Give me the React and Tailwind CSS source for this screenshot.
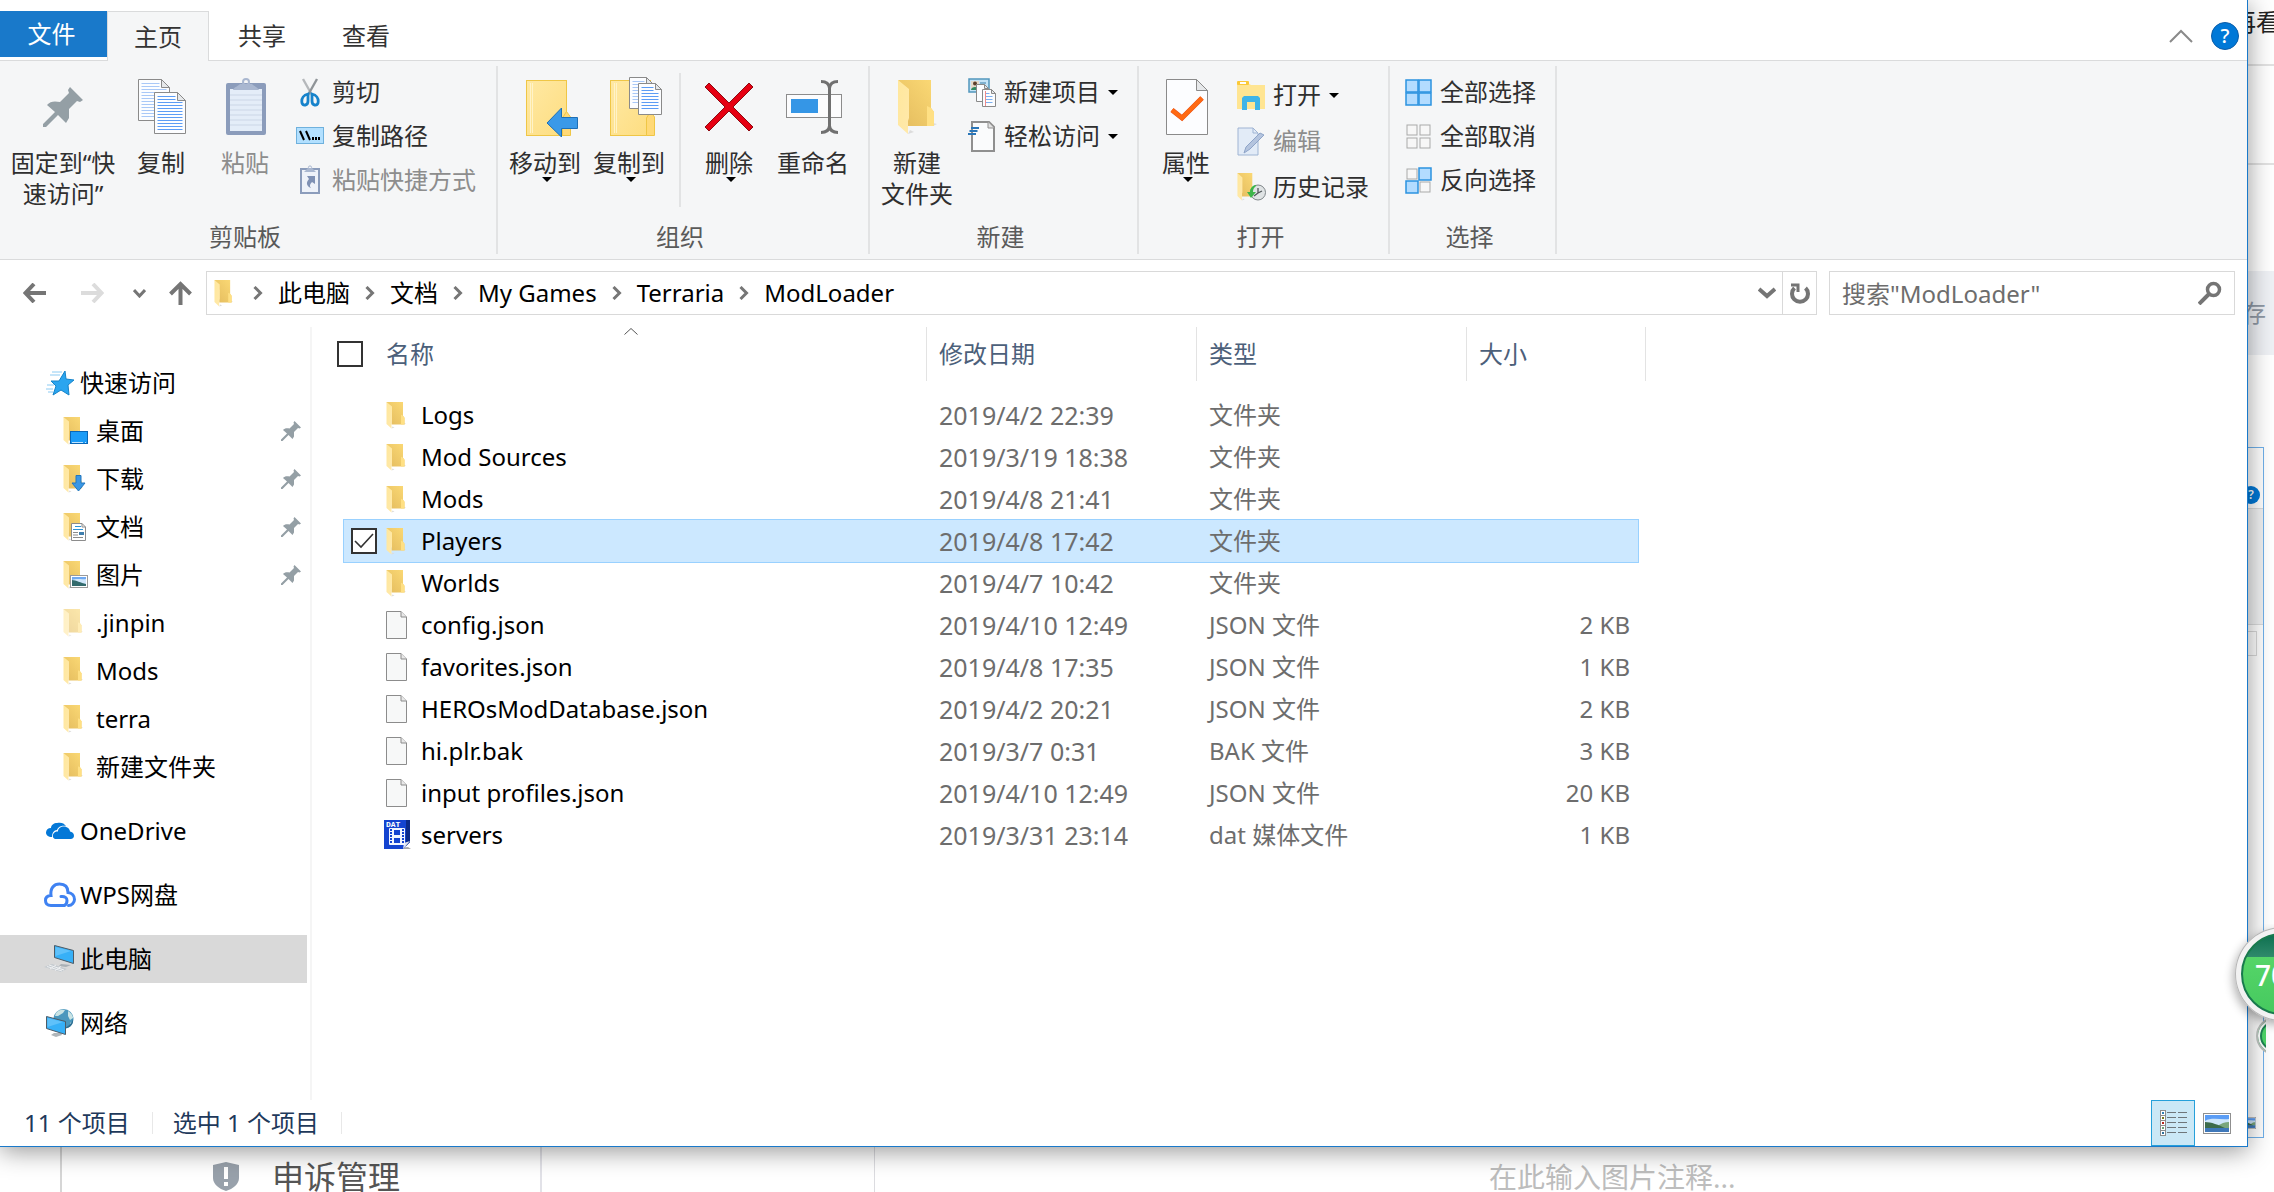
import React from "react";

const FONT = "font-['Noto_Sans','Noto_Sans_CJK_SC',sans-serif]";

/* ---------- icons ---------- */

function Page({ x = 0, y = 0, w, h, fold = 8, lines = 0, stroke = "#8a8a8a", ink = "#5b9cf5", gap = 3 }) {
  return (
    <g>
      <path
        d={`M${x} ${y}H${x + w - fold}L${x + w} ${y + fold}V${y + h}H${x}Z`}
        fill="#fcfdff"
        stroke={stroke}
      />
      <path
        d={`M${x + w - fold} ${y}V${y + fold}H${x + w}Z`}
        fill="#e6e8ea"
        stroke={stroke}
      />
      {Array.from({ length: lines }, (_, i) => (
        <path
          key={i}
          d={`M${x + 3} ${y + 4 + i * gap}H${4 + i * gap <= fold + 1 ? x + w - fold - 2 : x + w - 3}`}
          stroke={ink}
        />
      ))}
    </g>
  );
}

function Folder({ w = 20, h = 27, faded = false }) {
  return (
    <svg width={w} height={h} viewBox="0 0 40 55" preserveAspectRatio="none" opacity={faded ? 0.6 : 1} aria-hidden="true">
      <defs>
        <linearGradient id="folderBack" x1="0" y1="1" x2="1" y2="0">
          <stop offset="0.2" stopColor="#e8c162" />
          <stop offset="1" stopColor="#fbd975" />
        </linearGradient>
        <linearGradient id="folderFront" x1="0" y1="0" x2="1" y2="1">
          <stop offset="0" stopColor="#ffe79c" />
          <stop offset="1" stopColor="#ffe9ab" />
        </linearGradient>
      </defs>
      <path d="M11 54L17 52L13 50ZM36 46L40 44L36 43Z" fill="#dcdcdc" />
      <path d="M1 0H34V28L37 32V46H11V20Z" fill="url(#folderBack)" />
      <path d="M30 26L34 28L37 32V46H30Z" fill="#ffe084" />
      <path d="M1 0L12 9V38L11 41V54L1 45Z" fill="url(#folderFront)" />
    </svg>
  );
}

function PinIcon({ size = 40 }) {
  return (
    <svg width={size} height={size} viewBox="0 0 40 40" fill="#949fa5" aria-hidden="true">
      <path d="M27 0L40 13L37 15L34 14L26 22V31L23 36L15 28L3 40H0V37L12 25L4 18C7 14 12 14 17 15L26 6L25 3Z" />
    </svg>
  );
}

function CopyIcon() {
  return (
    <svg width="48" height="57" viewBox="0 0 48 57" className="ml-0.5" aria-hidden="true">
      <Page x={0.5} y={0.5} w={31} h={41} lines={12} ink="#a9c8f7" />
      <Page x={16.5} y={13.5} w={31} h={41} lines={12} />
    </svg>
  );
}

function PasteIcon() {
  return (
    <svg width="40" height="58" viewBox="0 0 40 58" className="ml-0.5" aria-hidden="true">
      <rect x="0" y="5" width="40" height="52" rx="2" fill="#8b9cbb" />
      <path d="M4 11H36V53H4Z" fill="#e4edf8" />
      <path d="M4 17H36M4 22H36M4 27H36M4 32H36M4 37H36M4 42H36M4 47H36" stroke="#cbd6e6" />
      <path d="M7 12C8 9 11 9 14 6H26C29 9 32 9 33 12Z" fill="#a9b7d0" />
      <circle cx="20" cy="4" r="3" fill="none" stroke="#a9b7d0" strokeWidth="2" />
    </svg>
  );
}

function CutIcon() {
  return (
    <svg width="20" height="29" viewBox="0 0 20 29" fill="none" aria-hidden="true">
      <path d="M3 1L12 17" stroke="#b5b8bb" strokeWidth="2.4" />
      <path d="M17 1L8 17" stroke="#8f9498" strokeWidth="2.4" />
      <path d="M8 16C4 17 1 20 2 25C3 28 8 28 8 23ZM12 16C16 17 19 20 18 25C17 28 12 28 12 23Z" stroke="#1783cb" strokeWidth="2.8" />
    </svg>
  );
}

function PathIcon() {
  return (
    <svg width="28" height="18" viewBox="0 0 28 18" aria-hidden="true">
      <rect x="0.5" y="0.5" width="27" height="16" fill="#b2e0ff" stroke="#6fb1dd" />
      <path d="M4 4L8 13M10 4L14 13" stroke="#000" strokeWidth="2" />
      <path d="M16 10H18V13H16ZM19 10H21V13H19ZM22 10H24V13H22Z" fill="#000" />
    </svg>
  );
}

function PasteShortcutIcon() {
  return (
    <svg width="20" height="30" viewBox="0 0 20 30" aria-hidden="true">
      <rect x="1" y="4" width="18" height="24" fill="#eef2f9" stroke="#8b9cbb" strokeWidth="2" />
      <path d="M4 7L8 3H12L16 7Z" fill="#a9b7d0" />
      <circle cx="10" cy="2.5" r="1.6" fill="none" stroke="#a9b7d0" />
      <path d="M7 11H15V19L12 17C10 19 9 21 11 23C6 21 6 17 9 14Z" fill="#7f91b4" />
    </svg>
  );
}

function FolderBase({ children }) {
  return (
    <svg width="54" height="60" viewBox="0 0 54 60" className="ml-4" aria-hidden="true">
      <defs>
        <linearGradient id="flatFolder" x1="0" y1="0" x2="1" y2="1">
          <stop offset="0" stopColor="#ffe9a4" />
          <stop offset="1" stopColor="#fddd80" />
        </linearGradient>
      </defs>
      <rect x="0.5" y="3.5" width="40" height="55" fill="url(#flatFolder)" stroke="#efc646" />
      <path d="M4.5 6V56M6.5 6V56" stroke="#fff3c9" />
      <path d="M36.5 58.5V41L40.5 34.5L44.5 40V58.5Z" fill="#ffd977" stroke="#efc646" />
      {children}
    </svg>
  );
}

function MoveToIcon() {
  return (
    <FolderBase>
      <path d="M21 46L35.5 31V40.5H51.5V51.5H35.5V60Z" fill="#3a99e8" stroke="#1e6fb5" />
    </FolderBase>
  );
}

function CopyToIcon() {
  return (
    <FolderBase>
      <Page x={19.5} y={0.5} w={23} h={31} fold={6} lines={8} ink="#a9c8f7" />
      <Page x={28.5} y={6.5} w={23} h={31} fold={6} lines={8} />
    </FolderBase>
  );
}

function DeleteIcon() {
  return (
    <svg width="50" height="50" viewBox="0 0 50 50" aria-hidden="true">
      <path d="M5 1L25 21L45 1L49 5L29 25L49 45L45 49L25 29L5 49L1 45L21 25L1 5Z" fill="#e60012" stroke="#8e0b12" />
    </svg>
  );
}

function RenameIcon() {
  return (
    <svg width="56" height="54" viewBox="0 0 56 54" fill="none" className="ml-0.5" aria-hidden="true">
      <rect x="0.5" y="14.5" width="55" height="23" fill="#fcfcfd" stroke="#8c8c8c" />
      <rect x="5" y="19" width="27" height="14" fill="#3596e6" />
      <path d="M35 1.5C40 1.5 43 3 43.5 8V46C43 51 40 52.5 35 52.5M52 1.5C47 1.5 44 3 43.5 8M43.5 46C44 51 47 52.5 52 52.5" stroke="#707070" strokeWidth="3" />
    </svg>
  );
}

function NewItemIcon() {
  return (
    <svg width="29" height="29" viewBox="0 0 29 29" aria-hidden="true">
      <rect x="1" y="1" width="20" height="13" fill="#c5e4f7" stroke="#5197bd" strokeWidth="1.5" />
      <rect x="3" y="3" width="8" height="9" fill="#e5d9c8" />
      <circle cx="7" cy="5.5" r="2" fill="#5b3f2c" />
      <path d="M3 12C3 8 11 8 11 12Z" fill="#2f8a62" />
      <path d="M12 5H18" stroke="#3b7fa8" />
      <Page x={8.5} y={6.5} w={12} h={17} fold={4} />
      <Page x={14.5} y={11.5} w={13} h={17} fold={4} lines={4} ink="#7db0f0" />
      <path d="M17.5 13V28" stroke="#f08a8a" />
    </svg>
  );
}

function EasyAccessIcon() {
  return (
    <svg width="28" height="31" viewBox="0 0 28 31" aria-hidden="true">
      <path d="M4 1H21L26 6V30H4Z" fill="#fafbfc" stroke="#8f8f8f" strokeWidth="2" />
      <path d="M20 1V7H26" fill="#e3e3e3" stroke="#8f8f8f" />
      <path d="M3 7H11M1.5 10H9.5M0 13H8" stroke="#2a76b8" strokeWidth="1.8" />
    </svg>
  );
}

function PropertiesIcon() {
  return (
    <svg width="43" height="57" viewBox="0 0 43 57" className="ml-0.5" aria-hidden="true">
      <Page x={0.5} y={0.5} w={41} h={55} fold={11} />
      <path d="M6 31L16 39L36 19" fill="none" stroke="#e8521b" strokeWidth="5" />
      <path d="M6 31L16 39L36 19" fill="none" stroke="#ff6a13" strokeWidth="4" />
    </svg>
  );
}

function OpenIcon() {
  return (
    <svg width="28" height="29" viewBox="0 0 28 29" aria-hidden="true">
      <path d="M0 2H11L14 4H28V28H0Z" fill="#ffe592" />
      <rect x="0" y="0" width="12" height="4" rx="1" fill="#fbc938" />
      <rect x="3" y="1" width="6" height="2" fill="#fff" />
      <path d="M5 29V17L7 15H21L23 17V29H18V21H10V29Z" fill="#3fb4e8" />
    </svg>
  );
}

function EditIcon() {
  return (
    <svg width="28" height="29" viewBox="0 0 28 29" aria-hidden="true">
      <path d="M1 1H16L21 6V28H1Z" fill="#e2ebf7" stroke="#9fb4d3" />
      <path d="M16 1V6H21" fill="none" stroke="#9fb4d3" />
      <path d="M7 26L9 20L23 6L27 8L13 22Z" fill="#b4c4de" stroke="#8ea4c8" />
    </svg>
  );
}

function HistoryIcon() {
  return (
    <div className="relative h-7 w-7">
      <Folder w={18} h={28} />
      <svg className="absolute -right-px bottom-0" width="19" height="17" viewBox="0 0 19 17" aria-hidden="true">
        <circle cx="11" cy="8.5" r="7.5" fill="#dfe3e4" stroke="#7f8689" />
        <path d="M11 4V9L15 7M11 9L7 12" stroke="#51575a" fill="none" strokeWidth="1.3" />
        <path d="M9 2L7 4C6 6 6 7 6 8H9L4 14L0 8H3C3 4 6 1 9 1Z" fill="#3db54a" />
      </svg>
    </div>
  );
}

const SELECT_STYLES = {
  on: { fill: "#b3dcff", stroke: "#2b93e0" },
  off: { fill: "#f7f7f7", stroke: "#a9a9a9" },
};

function SelectIcon({ cells }) {
  const spots = [[1, 1], [14, 1], [1, 14], [14, 14]];
  return (
    <svg width="27" height="27" viewBox="0 0 27 27" aria-hidden="true">
      {cells.map((c, i) => {
        const s = SELECT_STYLES[c];
        const inset = c === "off" ? 1 : 0;
        return (
          <rect
            key={i}
            x={spots[i][0] + inset}
            y={spots[i][1] + inset}
            width={12 - 2 * inset}
            height={12 - 2 * inset}
            fill={s.fill}
            stroke={s.stroke}
            strokeWidth={c === "on" ? 1.5 : 1}
          />
        );
      })}
    </svg>
  );
}

function Caret() {
  return (
    <svg width="10" height="5" viewBox="0 0 10 5" aria-hidden="true">
      <path d="M0 0H10L5 5Z" />
    </svg>
  );
}

function Chevron({ className = "" }) {
  return (
    <svg className={className} width="10" height="14" viewBox="0 0 10 14" fill="none" stroke="#767676" strokeWidth="3" aria-hidden="true">
      <path d="M1.5 1L7.5 7L1.5 13" />
    </svg>
  );
}

function StarIcon() {
  return (
    <svg width="28" height="25" viewBox="0 0 28 25" aria-hidden="true">
      <path d="M19 0L20 8L28 9L22 14L23 24L15 19L7 24L10 15L5 10H13Z" fill="#2ba5ef" stroke="#1583c9" />
      <path d="M6 1H16M4 4H14M1 14H8M0 18H7M2 21H7" stroke="#8ccbf3" />
    </svg>
  );
}

function SideFolder({ badge, faded }) {
  return (
    <span className="relative block h-7 w-7">
      <Folder w={20} h={28} faded={faded} />
      {badge && (
        <svg className="absolute right-0.5 bottom-0" width="20" height="18" viewBox="0 0 20 18" aria-hidden="true">
          {badge === "desktop" && (
            <>
              <rect x="1.5" y="4.5" width="17" height="12" fill="#1b9cf7" stroke="#0a66b5" />
              <path d="M3 15.5H14M16 15.5H17" stroke="#bfe4ff" />
            </>
          )}
          {badge === "download" && <path d="M7 0.5H12V8H16L9.500 16L3 8H7Z" fill="#3a97e5" stroke="#2277bd" />}
          {badge === "doc" && (
            <>
              <path d="M2.5 0.5H13L16.5 4V17.5H2.5Z" fill="#fff" stroke="#8c8c8c" />
              <path d="M13 0.5V4H16.5" fill="none" stroke="#8c8c8c" />
              <path d="M6 3.500H12M4 6.500H14" stroke="#2c93d6" />
              <path d="M4 9.500H9M4 12H9M4 14.500H14" stroke="#8b8b8b" />
              <path d="M10 9H15V12H10Z" fill="#3f7fae" />
            </>
          )}
          {badge === "picture" && (
            <>
              <rect x="1.5" y="4.5" width="17" height="12" fill="#fff" stroke="#9a9a9a" />
              <rect x="3" y="6" width="14" height="9" fill="#6fa9f2" />
              <path d="M3 9C8 7 12 9 17 8V13H3Z" fill="#cfe6fa" />
              <path d="M3 9C7 9 12 12 17 13V15H3Z" fill="#336b6d" />
            </>
          )}
        </svg>
      )}
    </span>
  );
}

function OneDriveIcon() {
  return (
    <svg width="28" height="18" viewBox="0 0 28 18" fill="#0478d7" aria-hidden="true">
      <path d="M6 15C2 15 0 13 0 10.5C0 8 2 6 5 6C5 3 8 1 11 1C15 0 18 1 20 4C14 3 12 6 11 8C8 8 6 11 6 15Z" />
      <path d="M10 17C7 17 6.5 14.5 7 12.5C8 10 10 9.5 12 9.5C12 6 15 4.5 18 4.5C21 4.5 24 7 24 9.5C26 10 28 11 28 14C28 16 26 17 25 17Z" />
    </svg>
  );
}

function WpsIcon() {
  return (
    <svg width="32" height="26" viewBox="0 0 32 26" fill="none" stroke="#3f82f2" strokeWidth="3" strokeLinecap="round" className="shrink-0" aria-hidden="true">
      <path d="M20 23.5H7C3 23.5 1.5 21 1.5 18.5C1.5 15 4 13.5 7 13.5C6 6 10 2 15.5 2C21 2 24 5 24 10.5C28 11 30.500 14 30.500 17.500C30.500 20 28 23.500 24.500 23.500" />
      <path d="M17 14.500C21 14 23 16 23 18.500C23 21 22 23 20 23.500" />
    </svg>
  );
}

function Monitor() {
  return (
    <>
      <path d="M0.500 0.500L19.500 5.500V18.500L0.500 12.500Z" fill="#37b0f7" stroke="#4d5b66" />
      <path d="M1.500 2L17 6L1.500 11Z" fill="#5fc1fa" />
    </>
  );
}

function PcIcon() {
  return (
    <svg width="31" height="28" viewBox="0 0 31 28" className="shrink-0" aria-hidden="true">
      <path d="M17 19L27 20L22 22L15 21Z" fill="#a9b0b5" />
      <path d="M8 19L23 24L17 27L0 22Z" fill="#c4cacf" />
      <path d="M5 20L20 25M3 21.500L18 26M12 20L6 24M17 21.500L11 25.500" stroke="#eef0f2" />
      <g transform="translate(10 0)">
        <Monitor />
      </g>
    </svg>
  );
}

function NetworkIcon() {
  return (
    <svg width="28" height="28" viewBox="0 0 28 28" aria-hidden="true">
      <circle cx="17.500" cy="10" r="10" fill="#4a97bd" />
      <path d="M10 4C12 1 16 0 19 1L17 4L12 7L9 7ZM22 2C25 4 27 6 27 9L24 11L22 7ZM24 14L26 13L24 17Z" fill="#c9e3e4" />
      <path d="M18 19C22 18 26 14 27 10C28 16 23 20 18 19Z" fill="#2e6f93" />
      <path d="M8 24L15 24L16 26L10 28L5 26Z" fill="#b0b6ba" />
      <g transform="translate(0 7)">
        <Monitor />
      </g>
    </svg>
  );
}

function FileIcon() {
  return (
    <svg width="21" height="28" viewBox="0 0 21 28" aria-hidden="true">
      <path d="M0.5 0.5H15L20.5 6V27.5H0.5Z" fill="#f7f8f8" stroke="#8c8c8c" />
      <path d="M15 0.5V6H20.5" fill="#e8e8e8" stroke="#8c8c8c" />
    </svg>
  );
}

function DatIcon() {
  return (
    <svg className="-ml-0.5" width="28" height="30" viewBox="0 0 28 30" aria-hidden="true">
      <path d="M3 29L24 27L27 29Z" fill="#a7a7a7" />
      <path d="M0 0H26V22L19 29H0Z" fill="#1444d0" />
      <path d="M22 0H26V22L22 26Z" fill="#0b2a88" />
      <path d="M26 21L19 29L20 23Z" fill="#e2e6ee" />
      <text x="2" y="7" fontSize="8" fontFamily="Liberation Mono, monospace" fontWeight="700" fill="#fff">DAT</text>
      <rect x="5" y="8" width="16" height="17" rx="1" fill="#f2f6ff" />
      <path d="M7 9V24M19 9V24" stroke="#1444d0" strokeWidth="2" strokeDasharray="2 1" />
      <path d="M10 10H16V15H10ZM10 18H16V23H10Z" fill="#1444d0" />
    </svg>
  );
}

function PictureIcon({ w = 28, h = 21 }) {
  return (
    <svg width={w} height={h} viewBox="0 0 28 21" preserveAspectRatio="none" aria-hidden="true">
      <rect x="0.5" y="0.5" width="27" height="20" fill="#fff" stroke="#8f8f8f" />
      <rect x="2" y="2" width="24" height="17" fill="#5b9df5" />
      <path d="M2 8C8 4 18 7 26 6V14H2Z" fill="#cfe6fa" />
      <path d="M14 14C18 10 22 9 26 9V15H14Z" fill="#7aa67c" />
      <path d="M2 9C8 9 16 12 22 15H2Z" fill="#3d6b4b" />
      <path d="M2 15H26V19H2Z" fill="#3f78b9" />
    </svg>
  );
}

function DetailsIcon() {
  const marks = ["#2d7fb5", "#7a7a1c", "#b8251c", "#6aa377", "#2d6f9a"];
  return (
    <svg width="28" height="27" viewBox="0 0 28 27" className="ml-0.5" aria-hidden="true">
      {marks.map((c, i) => (
        <g key={c}>
          <rect x="0.5" y={0.5 + i * 5} width="5" height="5" fill="#fff" stroke="#8c8c8c" />
          <rect x="2" y={2 + i * 5} width="2" height="2" fill={c} />
          <path d={`M7 ${2.5 + i * 5}H16M18 ${2.5 + i * 5}H27`} stroke="#6f767a" />
        </g>
      ))}
    </svg>
  );
}

/* ---------- ribbon ---------- */

function BigButton({ icon, lines, caret, disabled, wide }) {
  return (
    <button
      type="button"
      disabled={disabled}
      className={`flex shrink-0 flex-col items-center ${wide ? "w-[112px]" : "w-[84px]"} ${disabled ? "text-[#8d8d8d]" : "text-[#2f2f2f]"}`}
    >
      <span className="mt-4 mb-2.5 flex h-[60px] items-center justify-center">{icon}</span>
      {lines.map((l) => (
        <span key={l} className="leading-[31px] whitespace-nowrap">{l}</span>
      ))}
      {caret && <span className="-mt-px ml-1 text-black"><Caret /></span>}
    </button>
  );
}

function SmallButton({ icon, label, caret, disabled, tall }) {
  return (
    <button
      type="button"
      disabled={disabled}
      className={`flex items-center gap-1.5 whitespace-nowrap ${tall ? "h-[46px]" : "h-11"} ${disabled ? "text-[#8d8d8d]" : "text-[#2f2f2f]"}`}
    >
      <span className="flex w-8 justify-center">{icon}</span>
      <span>{label}</span>
      {caret && <span className="ml-0.5 text-black"><Caret /></span>}
    </button>
  );
}

function Group({ label, width, children }) {
  return (
    <>
      <section aria-label={label} className={`flex shrink-0 flex-col ${width}`}>
        <div className="flex flex-1 items-start">{children}</div>
        <div className="pr-1.5 pb-1.5 text-center leading-8 text-[#5a5a5a]">{label}</div>
      </section>
      <div className="my-[5px] w-0.5 shrink-0 bg-[#e2e3e4]" />
    </>
  );
}

function Ribbon() {
  return (
    <div className="flex h-[199px] border-b border-[#dadbdc] bg-[#f5f6f7]">
      <Group label="剪贴板" width="w-[496px]">
        <div className="ml-[7px] flex">
          <BigButton wide icon={<PinIcon />} lines={["固定到“快", "速访问”"]} />
          <BigButton icon={<CopyIcon />} lines={["复制"]} />
          <BigButton icon={<PasteIcon />} lines={["粘贴"]} disabled />
        </div>
        <div className="ml-[7px] pt-[9px]">
          <SmallButton icon={<CutIcon />} label="剪切" />
          <SmallButton icon={<PathIcon />} label="复制路径" />
          <SmallButton icon={<PasteShortcutIcon />} label="粘贴快捷方式" disabled />
        </div>
      </Group>
      <Group label="组织" width="w-[370px]">
        <div className="ml-[5px] flex">
          <BigButton icon={<MoveToIcon />} lines={["移动到"]} caret />
          <BigButton icon={<CopyToIcon />} lines={["复制到"]} caret />
        </div>
        <div className="mt-3 mr-1.5 ml-2 h-[134px] w-0.5 bg-[#e2e3e4]" />
        <BigButton icon={<DeleteIcon />} lines={["删除"]} caret />
        <BigButton icon={<RenameIcon />} lines={["重命名"]} />
      </Group>
      <Group label="新建" width="w-[267px]">
        <div className="ml-[5px]">
          <BigButton icon={<Folder w={40} h={55} />} lines={["新建", "文件夹"]} />
        </div>
        <div className="ml-[7px] pt-[9px]">
          <SmallButton icon={<NewItemIcon />} label="新建项目" caret />
          <SmallButton icon={<EasyAccessIcon />} label="轻松访问" caret />
        </div>
      </Group>
      <Group label="打开" width="w-[249px]">
        <div className="ml-[5px]">
          <BigButton icon={<PropertiesIcon />} lines={["属性"]} caret />
        </div>
        <div className="ml-[7px] pt-[11px]">
          <SmallButton tall icon={<OpenIcon />} label="打开" caret />
          <SmallButton tall icon={<EditIcon />} label="编辑" disabled />
          <SmallButton tall icon={<HistoryIcon />} label="历史记录" />
        </div>
      </Group>
      <Group label="选择" width="w-[165px]">
        <div className="ml-3 pt-[9px]">
          <SmallButton icon={<SelectIcon cells={["on", "on", "on", "on"]} />} label="全部选择" />
          <SmallButton icon={<SelectIcon cells={["off", "off", "off", "off"]} />} label="全部取消" />
          <SmallButton icon={<SelectIcon cells={["off", "on", "on", "off"]} />} label="反向选择" />
        </div>
      </Group>
    </div>
  );
}

function Tabs() {
  return (
    <div className="flex h-[61px] items-stretch text-[#333]">
      <div className="flex w-[107px] flex-col border-b border-[#dadbdc] pt-[11px]">
        <button type="button" className="h-[46px] bg-[#1979ca] pr-1 text-white">文件</button>
      </div>
      <button type="button" className="mt-[11px] w-[102px] border border-b-0 border-[#dadbdc] bg-[#f5f6f7]">主页</button>
      <div className="flex flex-1 items-stretch border-b border-[#dadbdc] pt-[11px]">
        <button type="button" className="w-[106px]">共享</button>
        <button type="button" className="w-[102px]">查看</button>
        <div className="ml-auto flex items-center gap-[18px] pr-2">
          <button type="button" aria-label="最小化功能区">
            <svg width="24" height="14" viewBox="0 0 24 14" fill="none" stroke="#8a8a8a" strokeWidth="2">
              <path d="M1 13L12 2L23 13" />
            </svg>
          </button>
          <button type="button" aria-label="帮助" className="h-7 w-7 rounded-full border border-[#0a5ca8] bg-[#0078d7] text-xl leading-6 font-medium text-white">?</button>
        </div>
      </div>
    </div>
  );
}

/* ---------- address bar ---------- */

function AddressBar() {
  const crumbs = ["此电脑", "文档", "My Games", "Terraria", "ModLoader"];
  return (
    <div className="flex h-[55px] items-stretch pt-[11px] pr-3">
      <nav aria-label="导航" className="flex w-[206px] shrink-0 items-center pl-[23px]">
        <button type="button" aria-label="后退">
          <svg width="23" height="20" viewBox="0 0 23 20" fill="none" stroke="#757575" strokeWidth="4">
            <path d="M23 10H3M11 1L2.5 10L11 19" />
          </svg>
        </button>
        <button type="button" aria-label="前进" className="ml-[35px]">
          <svg width="23" height="20" viewBox="0 0 23 20" fill="none" stroke="#dcdcdc" strokeWidth="4">
            <path d="M0 10H20M12 1L20.5 10L12 19" />
          </svg>
        </button>
        <button type="button" aria-label="最近浏览的位置" className="ml-[29px]">
          <svg width="13" height="9" viewBox="0 0 13 9" fill="none" stroke="#757575" strokeWidth="3">
            <path d="M1 1L6.5 7L12 1" />
          </svg>
        </button>
        <button type="button" aria-label="向上" className="ml-[23px]">
          <svg width="23" height="24" viewBox="0 0 23 24" fill="none" stroke="#757575" strokeWidth="4">
            <path d="M11.5 24V3M1.5 13L11.5 3L21.5 13" />
          </svg>
        </button>
      </nav>
      <div className="flex min-w-0 flex-1 items-stretch border border-[#d9d9d9]">
        <div className="flex min-w-0 flex-1 items-center pl-[7px]">
          <Folder w={19} h={27} />
          <ol className="ml-3 flex items-center">
            {crumbs.map((c) => (
              <li key={c} className="flex items-center">
                <Chevron className="ml-2" />
                <button type="button" className="mr-[7px] ml-[15px] whitespace-nowrap text-black">{c}</button>
              </li>
            ))}
          </ol>
          <button type="button" aria-label="历史位置" className="mr-1.5 ml-auto">
            <svg width="18" height="12" viewBox="0 0 18 12" fill="none" stroke="#757575" strokeWidth="4">
              <path d="M1 2L9 9L17 2" />
            </svg>
          </button>
        </div>
        <button type="button" aria-label="刷新" className="flex w-[34px] items-center justify-center border-l border-[#d9d9d9]">
          <svg width="20" height="23" viewBox="0 0 20 23" fill="none" stroke="#757575" strokeWidth="4">
            <path d="M4.5 6A8 8 0 1 0 15.5 6" />
            <path d="M1 3H8V10" strokeWidth="3" />
          </svg>
        </button>
      </div>
      <label className="ml-3 flex w-[406px] shrink items-center border border-[#d9d9d9] pr-3 pl-3">
        <span className="sr-only">搜索</span>
        <input
          type="search"
          placeholder={'搜索"ModLoader"'}
          className="h-full min-w-0 flex-1 bg-transparent outline-none placeholder:text-[#6d6d6d]"
        />
        <svg width="24" height="24" viewBox="0 0 24 24" fill="none" stroke="#757575" aria-hidden="true">
          <circle cx="15.5" cy="8.5" r="6" strokeWidth="3.5" />
          <path d="M11 13L1 23" strokeWidth="4" />
        </svg>
      </label>
    </div>
  );
}

/* ---------- navigation pane ---------- */

function SideItem({ icon, label, nested, pinned, selected, spaced }) {
  return (
    <li className={spaced ? "mt-4" : ""}>
      <a
        href="#"
        aria-current={selected ? "location" : undefined}
        className={`mr-[3px] flex h-12 items-center text-black ${nested ? "pl-[63px]" : "pl-[43px]"} ${selected ? "bg-[#d9d9d9]" : ""}`}
      >
        <span className={`flex shrink-0 items-center ${nested ? "w-[33px] justify-start" : "w-[37px] justify-center pr-1"}`}>{icon}</span>
        <span className="flex-1 whitespace-nowrap">{label}</span>
        {pinned && <span className="mr-1.5"><PinIcon size={20} /></span>}
      </a>
    </li>
  );
}

function Sidebar() {
  return (
    <nav aria-label="文件夹" className="w-[312px] shrink-0 border-r-2 border-[#f5f5f5] pt-8">
      <ul>
        <SideItem icon={<StarIcon />} label="快速访问" />
        <SideItem nested pinned icon={<SideFolder badge="desktop" />} label="桌面" />
        <SideItem nested pinned icon={<SideFolder badge="download" />} label="下载" />
        <SideItem nested pinned icon={<SideFolder badge="doc" />} label="文档" />
        <SideItem nested pinned icon={<SideFolder badge="picture" />} label="图片" />
        <SideItem nested icon={<SideFolder faded />} label=".jinpin" />
        <SideItem nested icon={<SideFolder />} label="Mods" />
        <SideItem nested icon={<SideFolder />} label="terra" />
        <SideItem nested icon={<SideFolder />} label="新建文件夹" />
        <SideItem spaced icon={<OneDriveIcon />} label="OneDrive" />
        <SideItem spaced icon={<WpsIcon />} label="WPS网盘" />
        <SideItem spaced selected icon={<PcIcon />} label="此电脑" />
        <SideItem spaced icon={<NetworkIcon />} label="网络" />
      </ul>
    </nav>
  );
}

/* ---------- file list ---------- */

const FILES = [
  { kind: "folder", name: "Logs", date: "2019/4/2 22:39", type: "文件夹", size: "" },
  { kind: "folder", name: "Mod Sources", date: "2019/3/19 18:38", type: "文件夹", size: "" },
  { kind: "folder", name: "Mods", date: "2019/4/8 21:41", type: "文件夹", size: "" },
  { kind: "folder", name: "Players", date: "2019/4/8 17:42", type: "文件夹", size: "", selected: true },
  { kind: "folder", name: "Worlds", date: "2019/4/7 10:42", type: "文件夹", size: "" },
  { kind: "file", name: "config.json", date: "2019/4/10 12:49", type: "JSON 文件", size: "2 KB" },
  { kind: "file", name: "favorites.json", date: "2019/4/8 17:35", type: "JSON 文件", size: "1 KB" },
  { kind: "file", name: "HEROsModDatabase.json", date: "2019/4/2 20:21", type: "JSON 文件", size: "2 KB" },
  { kind: "file", name: "hi.plr.bak", date: "2019/3/7 0:31", type: "BAK 文件", size: "3 KB" },
  { kind: "file", name: "input profiles.json", date: "2019/4/10 12:49", type: "JSON 文件", size: "20 KB" },
  { kind: "dat", name: "servers", date: "2019/3/31 23:14", type: "dat 媒体文件", size: "1 KB" },
];

function Checkbox({ label, defaultChecked }) {
  return (
    <span className="relative block h-[26px] w-[26px]">
      <input
        type="checkbox"
        aria-label={label}
        defaultChecked={defaultChecked}
        className="peer block h-full w-full appearance-none border-2 border-[#333] bg-white"
      />
      <svg
        className="pointer-events-none absolute inset-0 hidden peer-checked:block"
        width="26"
        height="26"
        viewBox="0 0 26 26"
        fill="none"
        stroke="#333"
        strokeWidth="1.6"
        aria-hidden="true"
      >
        <path d="M4 13L10 19L22 6" />
      </svg>
    </span>
  );
}

function HeaderCell({ children, last }) {
  return (
    <th scope="col" className="h-[67px] p-0 align-top font-normal">
      <div className={`flex h-[54px] items-center border-r border-[#e3e3e3] pl-3 ${last ? "-mr-2" : ""}`}>{children}</div>
    </th>
  );
}

function FileTable() {
  return (
    <table className="ml-8 w-[1294px] table-fixed border-collapse self-start text-left">
      <colgroup>
        <col className="w-[42px]" />
        <col className="w-[541px]" />
        <col className="w-[270px]" />
        <col className="w-[270px]" />
        <col />
      </colgroup>
      <thead className="text-[#4c607a]">
        <tr>
          <th scope="col" className="p-0 align-top">
            <div className="-ml-[7px] flex h-[54px] items-center">
              <Checkbox label="全选" />
            </div>
          </th>
          <th scope="col" aria-sort="ascending" className="relative h-[67px] p-0 align-top font-normal">
            <svg className="absolute top-px left-[238px]" width="14" height="7" viewBox="0 0 14 7" fill="none" stroke="#555" aria-hidden="true">
              <path d="M0.5 6.5L7 0.5L13.5 6.5" />
            </svg>
            <div className="flex h-[54px] items-center border-r border-[#e3e3e3]">名称</div>
          </th>
          <HeaderCell>修改日期</HeaderCell>
          <HeaderCell>类型</HeaderCell>
          <HeaderCell last>大小</HeaderCell>
        </tr>
      </thead>
      <tbody className="text-[#6d6d6d]">
        {FILES.map((f) => (
          <tr key={f.name} className={`h-[42px] ${f.selected ? "bg-[#cce8ff] outline outline-[#99d1ff]" : ""}`}>
            <td className="p-0 pl-[7px]">
              {f.selected && <Checkbox label={f.name} defaultChecked />}
            </td>
            <td className="p-0">
              <span className="flex items-center text-black">
                <span className="w-[35px]">
                  {f.kind === "folder" && <Folder w={20} h={27} />}
                  {f.kind === "file" && <FileIcon />}
                  {f.kind === "dat" && <DatIcon />}
                </span>
                {f.name}
              </span>
            </td>
            <td className="p-0 pl-3 text-[25px] leading-8">{f.date}</td>
            <td className="p-0 pl-3">{f.type}</td>
            <td className="p-0 pr-2 text-right">{f.size}</td>
          </tr>
        ))}
      </tbody>
    </table>
  );
}

function StatusBar() {
  return (
    <footer className="flex h-[46px] items-center text-[#1e395b]">
      <span className="pl-6 whitespace-nowrap">11 个项目</span>
      <span className="ml-[22px] h-[22px] w-px bg-[#e8e8e8]" />
      <span className="ml-5 whitespace-nowrap">选中 1 个项目</span>
      <span className="ml-[22px] h-[22px] w-px bg-[#e8e8e8]" />
      <button type="button" aria-label="详细信息" className="ml-auto flex h-[46px] w-11 items-center justify-center border border-[#26a0da] bg-[#cbe8f6]">
        <DetailsIcon />
      </button>
      <button type="button" aria-label="大图标" className="flex w-[52px] items-center pl-2">
        <PictureIcon />
      </button>
    </footer>
  );
}

/* ---------- what lies behind the window ---------- */

function RightStrip() {
  return (
    <aside className="relative flex flex-col overflow-hidden bg-white">
      <div className="flex h-[66px] shrink-0 items-center justify-end border-b-2 border-[#e2e2e2] pb-5 whitespace-nowrap text-[#222]">
        <span className="-mr-1.5">再看</span>
      </div>
      <div className="h-[99px] shrink-0 border-b-2 border-[#e2e2e2]" />
      <div className="h-[106px] shrink-0" />
      <div className="flex h-[84px] shrink-0 items-center justify-end bg-[#eff1f5] pr-2 text-[#8f99a5]">存</div>
      <div className="mt-[92px] mr-2.5 flex flex-1 flex-col border-y border-r border-[#6fb0ea]">
        <div className="flex h-[60px] items-end pb-1">
          <span className="-ml-1.5 flex h-[18px] w-[18px] items-center justify-center rounded-full bg-[#0078d7] text-xs font-semibold text-white">?</span>
        </div>
        <div className="h-[117px] border-y border-[#dadbdc] bg-[#f0f1f2]" />
        <div className="mt-1.5 mr-1.5 h-[25px] border border-l-0 border-[#d9d9d9]" />
        <div className="mt-auto mb-2 -ml-1">
          <PictureIcon w={12} h={12} />
        </div>
      </div>
      <div className="h-[9px] shrink-0" />
    </aside>
  );
}

function BottomStrip() {
  return (
    <div className="col-span-2 flex overflow-hidden bg-white">
      <div className="w-[62px] shrink-0 border-r-2 border-[#d6d6d6]" />
      <div className="flex w-[480px] shrink-0 items-center border-r-2 border-[#e2e2e8] pt-3.5 pl-[151px]">
        <svg width="26" height="29" viewBox="0 0 26 29" aria-hidden="true">
          <path d="M0 3L13 0L26 3V16C26 22 20 27 13 29C6 27 0 22 0 16Z" fill="#98a1ab" />
          <path d="M11 5H15V17H11ZM11 20H15V24H11Z" fill="#fff" />
        </svg>
        <span className="ml-[33px] text-[32px] leading-8 whitespace-nowrap text-[#555]">申诉管理</span>
      </div>
      <div className="w-[333px] shrink-0 border-r border-[#dcdce0]" />
      <div className="flex flex-1 items-center pt-3.5 pl-[614px]">
        <span className="text-[28px] leading-7 whitespace-nowrap text-[#bdbdbd]">在此输入图片注释...</span>
      </div>
    </div>
  );
}

function SpeedBalls() {
  return (
    <div className="absolute right-0 bottom-[134px] z-20 h-[134px] w-14 overflow-hidden">
      <div className="absolute top-[93px] left-[38px] h-[40px] w-2.5 overflow-hidden">
        <div className="h-[38px] w-[38px] rounded-full border-2 border-[#aeb3b0] bg-[#49cd63] shadow-[inset_0_0_0_2px_#eee,inset_0_0_0_4px_#1b7d4e]" />
      </div>
      <div className="absolute top-[3px] left-[17px] h-[94px] w-[94px] rounded-full bg-[#f2f2f2] p-1.5 shadow-[inset_0_0_0_1px_#b5b5b5,-2px_4px_10px_rgba(0,0,0,0.3)]">
        <div className="h-full overflow-hidden rounded-full border-2 border-[#187a4d] bg-[linear-gradient(#0f7050_0,#2f8a6b_22px,#55d568_22px,#46c95f)]">
          <span className="ml-3 block pt-6 text-[28px] leading-8 font-medium text-white">70%</span>
        </div>
      </div>
    </div>
  );
}

export default function App() {
  return (
    <div className={`relative grid min-h-screen grid-cols-[minmax(0,1fr)_26px] grid-rows-[minmax(0,1fr)_45px] overflow-hidden bg-white text-[24px] leading-8 ${FONT}`}>
      <main className="z-10 flex flex-col border-r border-b border-[#1979ca] bg-white shadow-[0_4px_24px_rgba(0,0,0,0.42)]">
        <Tabs />
        <Ribbon />
        <AddressBar />
        <div className="mt-3 flex flex-1 items-stretch">
          <Sidebar />
          <FileTable />
        </div>
        <StatusBar />
      </main>
      <RightStrip />
      <BottomStrip />
      <SpeedBalls />
    </div>
  );
}
